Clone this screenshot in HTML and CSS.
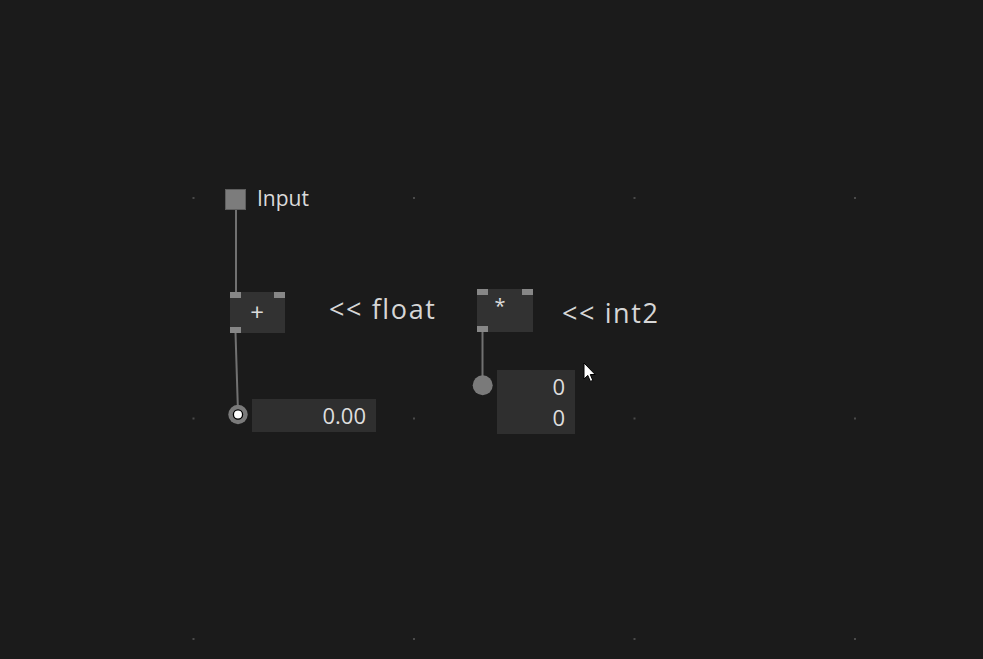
FILE: index.html
```html
<!DOCTYPE html>
<html>
<head>
<meta charset="utf-8">
<link rel="stylesheet" href="styles.css">
</head>
<body>
<div class="canvas">
  <svg class="wires" width="983" height="659" viewBox="0 0 983 659">
    <g class="grid">
      <rect x="192.5" y="197" width="2" height="2"/>
      <rect x="413" y="197" width="2" height="2"/>
      <rect x="633.5" y="197" width="2" height="2"/>
      <rect x="854" y="197" width="2" height="2"/>
      <rect x="192.5" y="417.5" width="2" height="2"/>
      <rect x="413" y="417.5" width="2" height="2"/>
      <rect x="633.5" y="417.5" width="2" height="2"/>
      <rect x="854" y="417.5" width="2" height="2"/>
      <rect x="192.5" y="638" width="2" height="2"/>
      <rect x="413" y="638" width="2" height="2"/>
      <rect x="633.5" y="638" width="2" height="2"/>
      <rect x="854" y="638" width="2" height="2"/>
    </g>
    <line class="wire" x1="236" y1="210" x2="236" y2="293"/>
    <line class="wire" x1="235.5" y1="332" x2="237.8" y2="406"/>
    <line class="wire" x1="482.5" y1="331" x2="482.5" y2="376"/>
    <circle class="ring" cx="238" cy="414.5" r="9.7"/>
    <circle class="dot" cx="238" cy="414.5" r="4.6"/>
    <circle class="ring" cx="482.7" cy="385.2" r="10"/>
  </svg>

  <div class="io-square"></div>
  <div class="label label-input">Input</div>

  <div class="node node-plus">
    <span class="pin pin-tl"></span>
    <span class="pin pin-tr"></span>
    <span class="pin pin-bl"></span>
    <span class="op op-plus">+</span>
  </div>
  <div class="label label-type label-float">&lt;&lt; float</div>

  <div class="node node-mul">
    <span class="pin pin-tl"></span>
    <span class="pin pin-tr"></span>
    <span class="pin pin-bl"></span>
    <span class="op op-mul">*</span>
  </div>
  <div class="label label-type label-int2">&lt;&lt; int2</div>

  <div class="value value-float">0.00</div>
  <div class="value value-int2">
    <div class="row">0</div>
    <div class="row">0</div>
  </div>

  <svg class="cursor" width="14" height="22" viewBox="0 0 14 22">
    <path d="M1 1 L1 17 L4.8 13.4 L7.4 19.4 L9.8 18.4 L7.3 12.5 L12.2 12.5 Z" fill="#ffffff" stroke="#000000" stroke-width="1" stroke-linejoin="round"/>
  </svg>
</div>
</body>
</html>
```

FILE: styles.css
```css
html, body {
  margin: 0;
  padding: 0;
  background: #1b1b1b;
}

.canvas {
  position: relative;
  width: 983px;
  height: 659px;
  overflow: hidden;
  background: #1b1b1b;
  font-family: "Open Sans", "DejaVu Sans", sans-serif;
  color: #d9d9d9;
}

.wires {
  position: absolute;
  left: 0;
  top: 0;
}

.grid rect {
  fill: #4a4a4a;
}

.wire {
  stroke: #717171;
  stroke-width: 2;
}

.ring {
  fill: #7a7a7a;
}

.dot {
  fill: #ffffff;
  stroke: #000000;
  stroke-width: 1.3;
}

.io-square {
  position: absolute;
  left: 225px;
  top: 189px;
  width: 19px;
  height: 19px;
  background: #7c7c7c;
  border: 1px solid #5e5e5e;
}

.label {
  position: absolute;
  white-space: nowrap;
  line-height: 1;
}

.label-input {
  left: 257px;
  top: 188px;
  font-size: 21px;
  color: #dadada;
}

.label-type {
  font-size: 27px;
  letter-spacing: 1.6px;
  color: #d6d6d6;
}

.label-float {
  left: 329px;
  top: 295px;
}

.label-int2 {
  left: 562px;
  top: 299px;
}

.node {
  position: absolute;
  background: #323232;
  display: flex;
  align-items: center;
  justify-content: center;
}

.node-plus {
  left: 230px;
  top: 292px;
  width: 55px;
  height: 41px;
}

.node-mul {
  left: 477px;
  top: 289px;
  width: 56px;
  height: 43px;
}

.pin {
  position: absolute;
  width: 11px;
  height: 6px;
  background: #878787;
}

.pin-tl { left: 0; top: 0; }
.pin-tr { right: 0; top: 0; }
.pin-bl { left: 0; bottom: 0; }

.op {
  line-height: 1;
  color: #dcdcdc;
}

.op-plus {
  font-size: 24px;
  margin-left: -1px;
  margin-top: -2px;
}

.op-mul {
  font-size: 20px;
  margin-top: -10px;
  margin-left: -10px;
}

.value {
  position: absolute;
  background: #2f2f2f;
  color: #dedede;
  font-size: 22px;
  text-align: right;
  box-sizing: border-box;
  padding-right: 10px;
}

.value-float {
  left: 252px;
  top: 399px;
  width: 124px;
  height: 33px;
  line-height: 32px;
}

.value-int2 {
  left: 497px;
  top: 370px;
  width: 78px;
  height: 64px;
  display: flex;
  flex-direction: column;
}

.value-int2 .row {
  height: 30px;
  line-height: 30px;
}

.value-int2 .row:first-child {
  height: 32px;
  line-height: 32px;
}

.cursor {
  position: absolute;
  left: 583px;
  top: 362px;
}
```
